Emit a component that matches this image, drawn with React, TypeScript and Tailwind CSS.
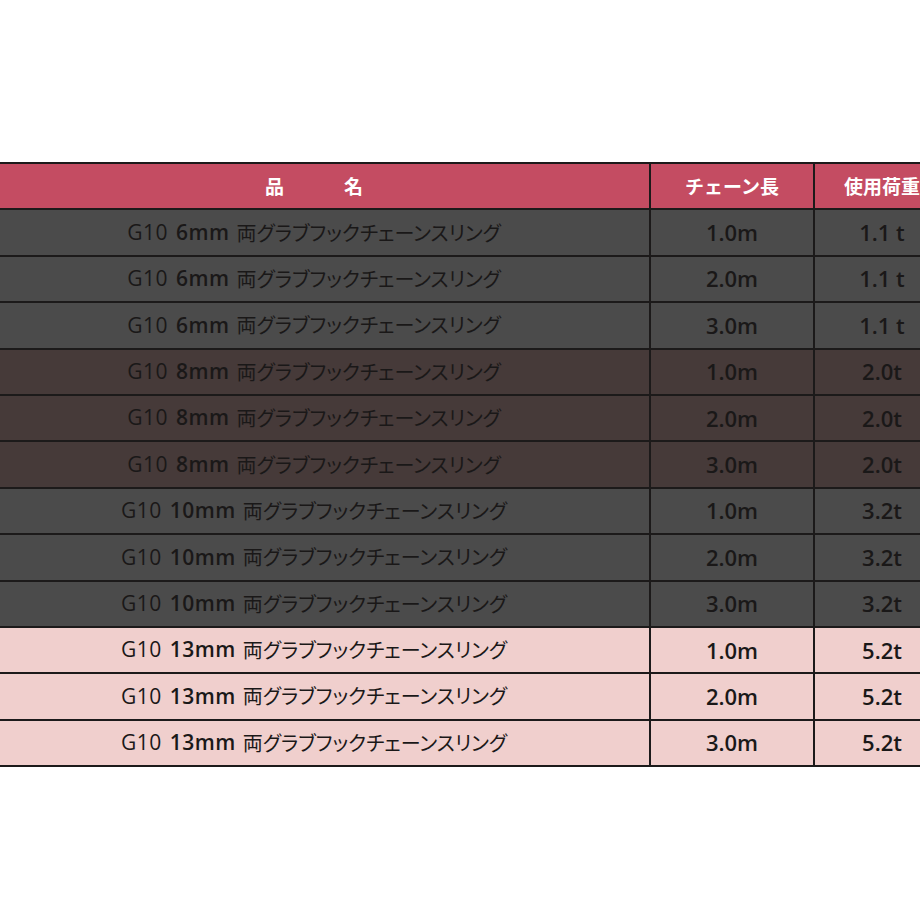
import React from "react";

type Row = { size: string; len: string; load: string; tone: "dark" | "brown" | "pink" };

const rows: Row[] = [
  { size: "6mm", len: "1.0m", load: "1.1 t", tone: "dark" },
  { size: "6mm", len: "2.0m", load: "1.1 t", tone: "dark" },
  { size: "6mm", len: "3.0m", load: "1.1 t", tone: "dark" },
  { size: "8mm", len: "1.0m", load: "2.0t", tone: "brown" },
  { size: "8mm", len: "2.0m", load: "2.0t", tone: "brown" },
  { size: "8mm", len: "3.0m", load: "2.0t", tone: "brown" },
  { size: "10mm", len: "1.0m", load: "3.2t", tone: "dark" },
  { size: "10mm", len: "2.0m", load: "3.2t", tone: "dark" },
  { size: "10mm", len: "3.0m", load: "3.2t", tone: "dark" },
  { size: "13mm", len: "1.0m", load: "5.2t", tone: "pink" },
  { size: "13mm", len: "2.0m", load: "5.2t", tone: "pink" },
  { size: "13mm", len: "3.0m", load: "5.2t", tone: "pink" },
];

const toneBg: Record<Row["tone"], string> = {
  dark: "bg-[#4b4b4b]",
  brown: "bg-[#463a39]",
  pink: "bg-[#f0cfcd]",
};

const latin = '"Open Sans", "Noto Sans CJK JP", sans-serif';

export default function App() {
  return (
    <div
      className="w-[920px] h-[920px] bg-white overflow-hidden pt-[162px]"
      style={{ fontFamily: '"Noto Sans CJK JP", "Noto Sans", sans-serif' }}
    >
      <div className="ml-[-21px] w-[972px] border-t-2 border-[#1c1a1a]">
        <div className="flex h-[46.4px] bg-[#c44c62] border-b-2 border-[#1c1a1a] text-white text-[19px] font-bold">
          <div className="w-[672px] flex items-center justify-center gap-[60px] border-r-2 border-[#1c1a1a]">
            <span>品</span>
            <span>名</span>
          </div>
          <div className="w-[164px] flex items-center justify-center border-r-2 border-[#1c1a1a]">
            チェーン長
          </div>
          <div className="w-[134px] flex items-center justify-center">使用荷重</div>
        </div>
        {rows.map((r, i) => (
          <div
            key={i}
            className={`flex h-[46.4px] ${toneBg[r.tone]} border-b-2 border-[#1c1a1a] text-[#1a1818]`}
          >
            <div className="w-[672px] flex items-center justify-center border-r-2 border-[#1c1a1a]">
              <span className="text-[21px] font-normal tracking-[0.5px]" style={{ fontFamily: latin }}>G10</span>
              <span className="text-[21px] font-semibold ml-[8px] tracking-[0.5px]" style={{ fontFamily: latin }}>{r.size}</span>
              <span className="ml-[7px] text-[20px] [font-feature-settings:'palt']">両グラブフックチェーンスリング</span>
            </div>
            <div
              className="w-[164px] flex items-center justify-center border-r-2 border-[#1c1a1a] font-semibold text-[22px]"
              style={{ fontFamily: latin }}
            >
              {r.len}
            </div>
            <div
              className="w-[134px] flex items-center justify-center font-semibold text-[22px]"
              style={{ fontFamily: latin }}
            >
              {r.load}
            </div>
          </div>
        ))}
      </div>
    </div>
  );
}
